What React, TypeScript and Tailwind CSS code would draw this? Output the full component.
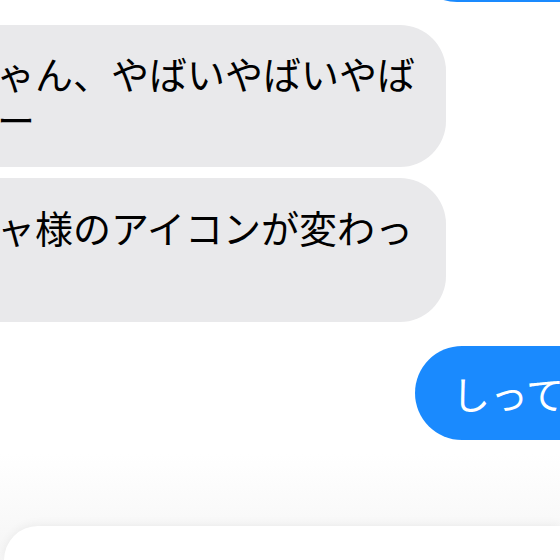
export default function App() {
  return (
    <div className="w-[560px] h-[560px] overflow-hidden bg-white flex flex-col font-['Noto_Sans_CJK_JP','Noto_Sans',sans-serif] text-[38px] leading-[46px]">
      {/* previous sent bubble, only its bottom edge visible */}
      <div className="-mt-[93px] ml-[410px] w-[200px] h-[95px] shrink-0 rounded-[47px] bg-[#1a8afe]" />

      {/* received bubble 1 */}
      <div className="mt-[23px] -ml-[78px] w-[524px] shrink-0 rounded-[46px] bg-[#e9e9eb] pl-[37px] pr-[20px] py-[25px] text-black whitespace-nowrap">
        <div>ちゃん、やばいやばいやば</div>
        <div>いー</div>
      </div>

      {/* received bubble 2 */}
      <div className="mt-[11px] -ml-[78px] w-[524px] shrink-0 rounded-[46px] bg-[#e9e9eb] pl-[37px] pr-[20px] py-[26px] text-black whitespace-nowrap">
        <div>ミャ様のアイコンが変わっ</div>
        <div>た</div>
      </div>

      {/* sent bubble */}
      <div className="mt-[24px] ml-[415px] w-[220px] shrink-0 rounded-[47px] bg-[#1a8afe] pl-[37px] py-[24px] text-white whitespace-nowrap">
        しってる
      </div>

      {/* bottom input area */}
      <div className="flex-1 mt-[14px] bg-linear-to-b from-white to-[#f5f5f5] pt-[72px] flex flex-col">
        <div className="flex-1 ml-[4px] rounded-tl-[44px] bg-white shadow-[0_-2px_10px_rgba(0,0,0,0.05)]" />
      </div>
    </div>
  );
}
